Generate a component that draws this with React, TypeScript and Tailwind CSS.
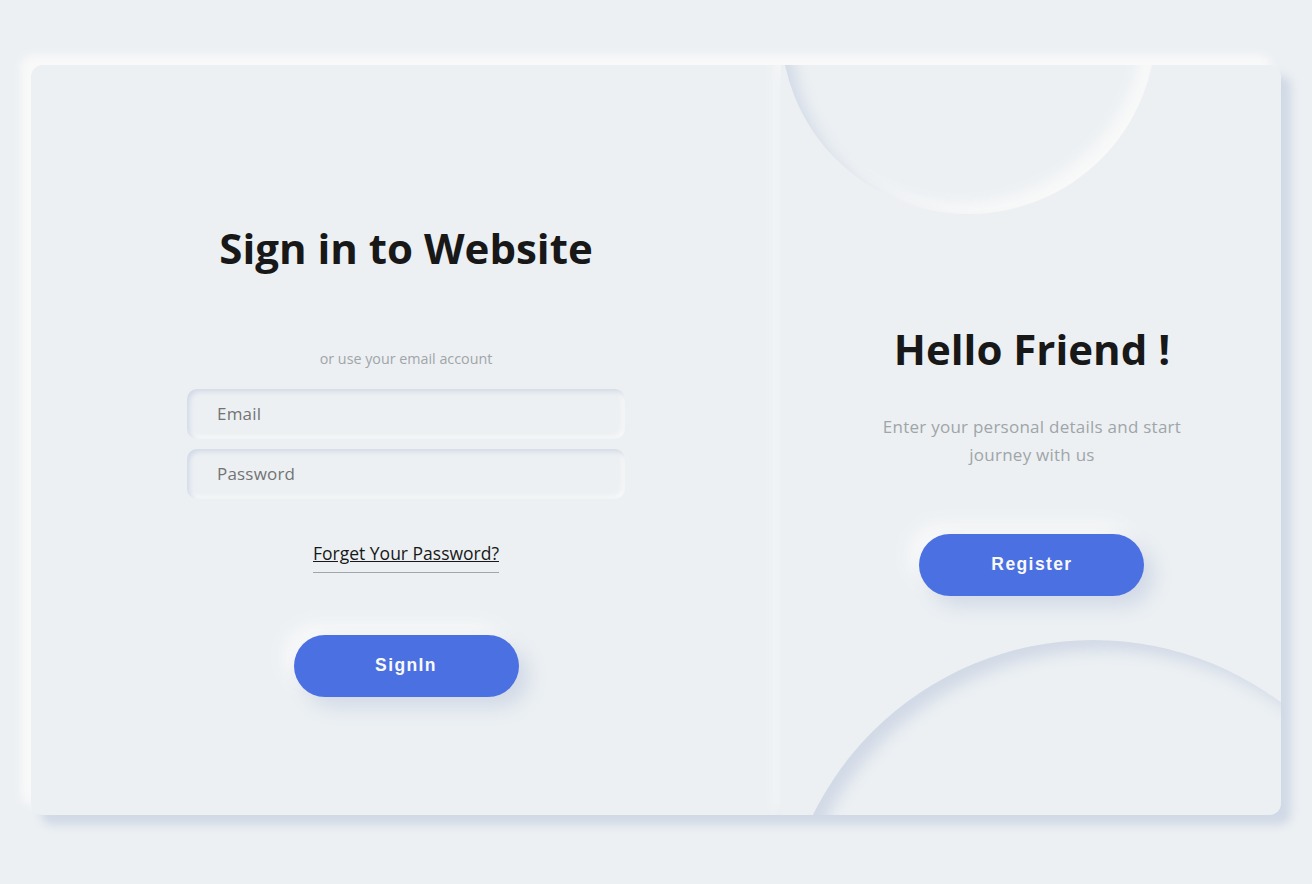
import React from 'react';

const ubuntu = { fontFamily: '"Open Sans", "Noto Sans", sans-serif' };

const App: React.FC = () => {
  return (
    <div className="min-h-screen w-full bg-[#ecf0f3] flex justify-center pt-[65px]" style={ubuntu}>
      <div className="flex w-[1250px] h-[750px] rounded-xl overflow-hidden bg-[#ecf0f3] shadow-[10px_10px_10px_#d1d9e6,-10px_-10px_10px_#f9f9f9]">
        {/* sign in form */}
        <div className="w-[750px] h-full flex flex-col items-center justify-center">
          <h2 className="text-[42px] leading-[128px] font-bold text-[#181818]">Sign in to Website</h2>
          <span className="mt-[37px] mb-[15px] text-[14.3px] leading-[20px] text-[#a0a5a8]">or use your email account</span>
          <input
            className="w-[438px] h-[50px] my-[5px] pl-[30px] text-[17px] tracking-[0.2px] rounded-[10px] bg-[#ecf0f3] outline-none placeholder:text-[#737373] shadow-[inset_2.5px_2.5px_5px_#d1d9e6,inset_-2.5px_-2.5px_5px_#f9f9f9]"
            placeholder="Email"
          />
          <input
            className="w-[438px] h-[50px] my-[5px] pl-[30px] text-[17px] tracking-[0.2px] rounded-[10px] bg-[#ecf0f3] outline-none placeholder:text-[#737373] shadow-[inset_2.5px_2.5px_5px_#d1d9e6,inset_-2.5px_-2.5px_5px_#f9f9f9]"
            placeholder="Password"
          />
          <a className="mt-[31px] text-[17.5px] leading-[37px] text-[#181818] underline border-b border-[#a0a5a8] cursor-pointer">
            Forget Your Password?
          </a>
          <button
            className="mt-[62px] w-[225px] h-[62px] rounded-full bg-[#4b70e2] text-[#f9f9f9] text-[17.5px] font-bold tracking-[1.4px] shadow-[10px_10px_20px_#d1d9e6,-10px_-10px_20px_#f9f9f9]"
            style={{ fontFamily: '"Liberation Sans", Arial, sans-serif' }}
          >
            SignIn
          </button>
        </div>

        {/* switch panel */}
        <div className="relative z-10 w-[500px] h-full overflow-hidden bg-[#ecf0f3] shadow-[5px_5px_12px_#d1d9e6,-5px_-5px_12px_#f9f9f9] flex flex-col items-center justify-center">
          <div className="absolute left-0 top-[-226px] w-[375px] h-[375px] rounded-full shadow-[inset_10px_10px_15px_#d1d9e6,inset_-10px_-10px_15px_#f9f9f9]" />
          <div className="absolute left-0 top-[575px] w-[625px] h-[625px] rounded-full shadow-[inset_10px_10px_15px_#d1d9e6,inset_-10px_-10px_15px_#f9f9f9]" />
          <div className="relative flex flex-col items-center pl-[2px]">
            <h2 className="text-[42px] leading-[128px] font-bold text-[#181818]">Hello Friend !</h2>
            <p className="text-[17px] leading-[28px] tracking-[0.25px] text-center text-[#a0a5a8]">
              Enter your personal details and start
              <br />
              journey with us
            </p>
            <button
              className="mt-[65px] w-[225px] h-[62px] rounded-full bg-[#4b70e2] text-[#f9f9f9] text-[17.5px] font-bold tracking-[1.4px] shadow-[10px_10px_20px_#d1d9e6,-10px_-10px_20px_#f9f9f9]"
              style={{ fontFamily: '"Liberation Sans", Arial, sans-serif' }}
            >
              Register
            </button>
          </div>
        </div>
      </div>
    </div>
  );
};

export default App;
